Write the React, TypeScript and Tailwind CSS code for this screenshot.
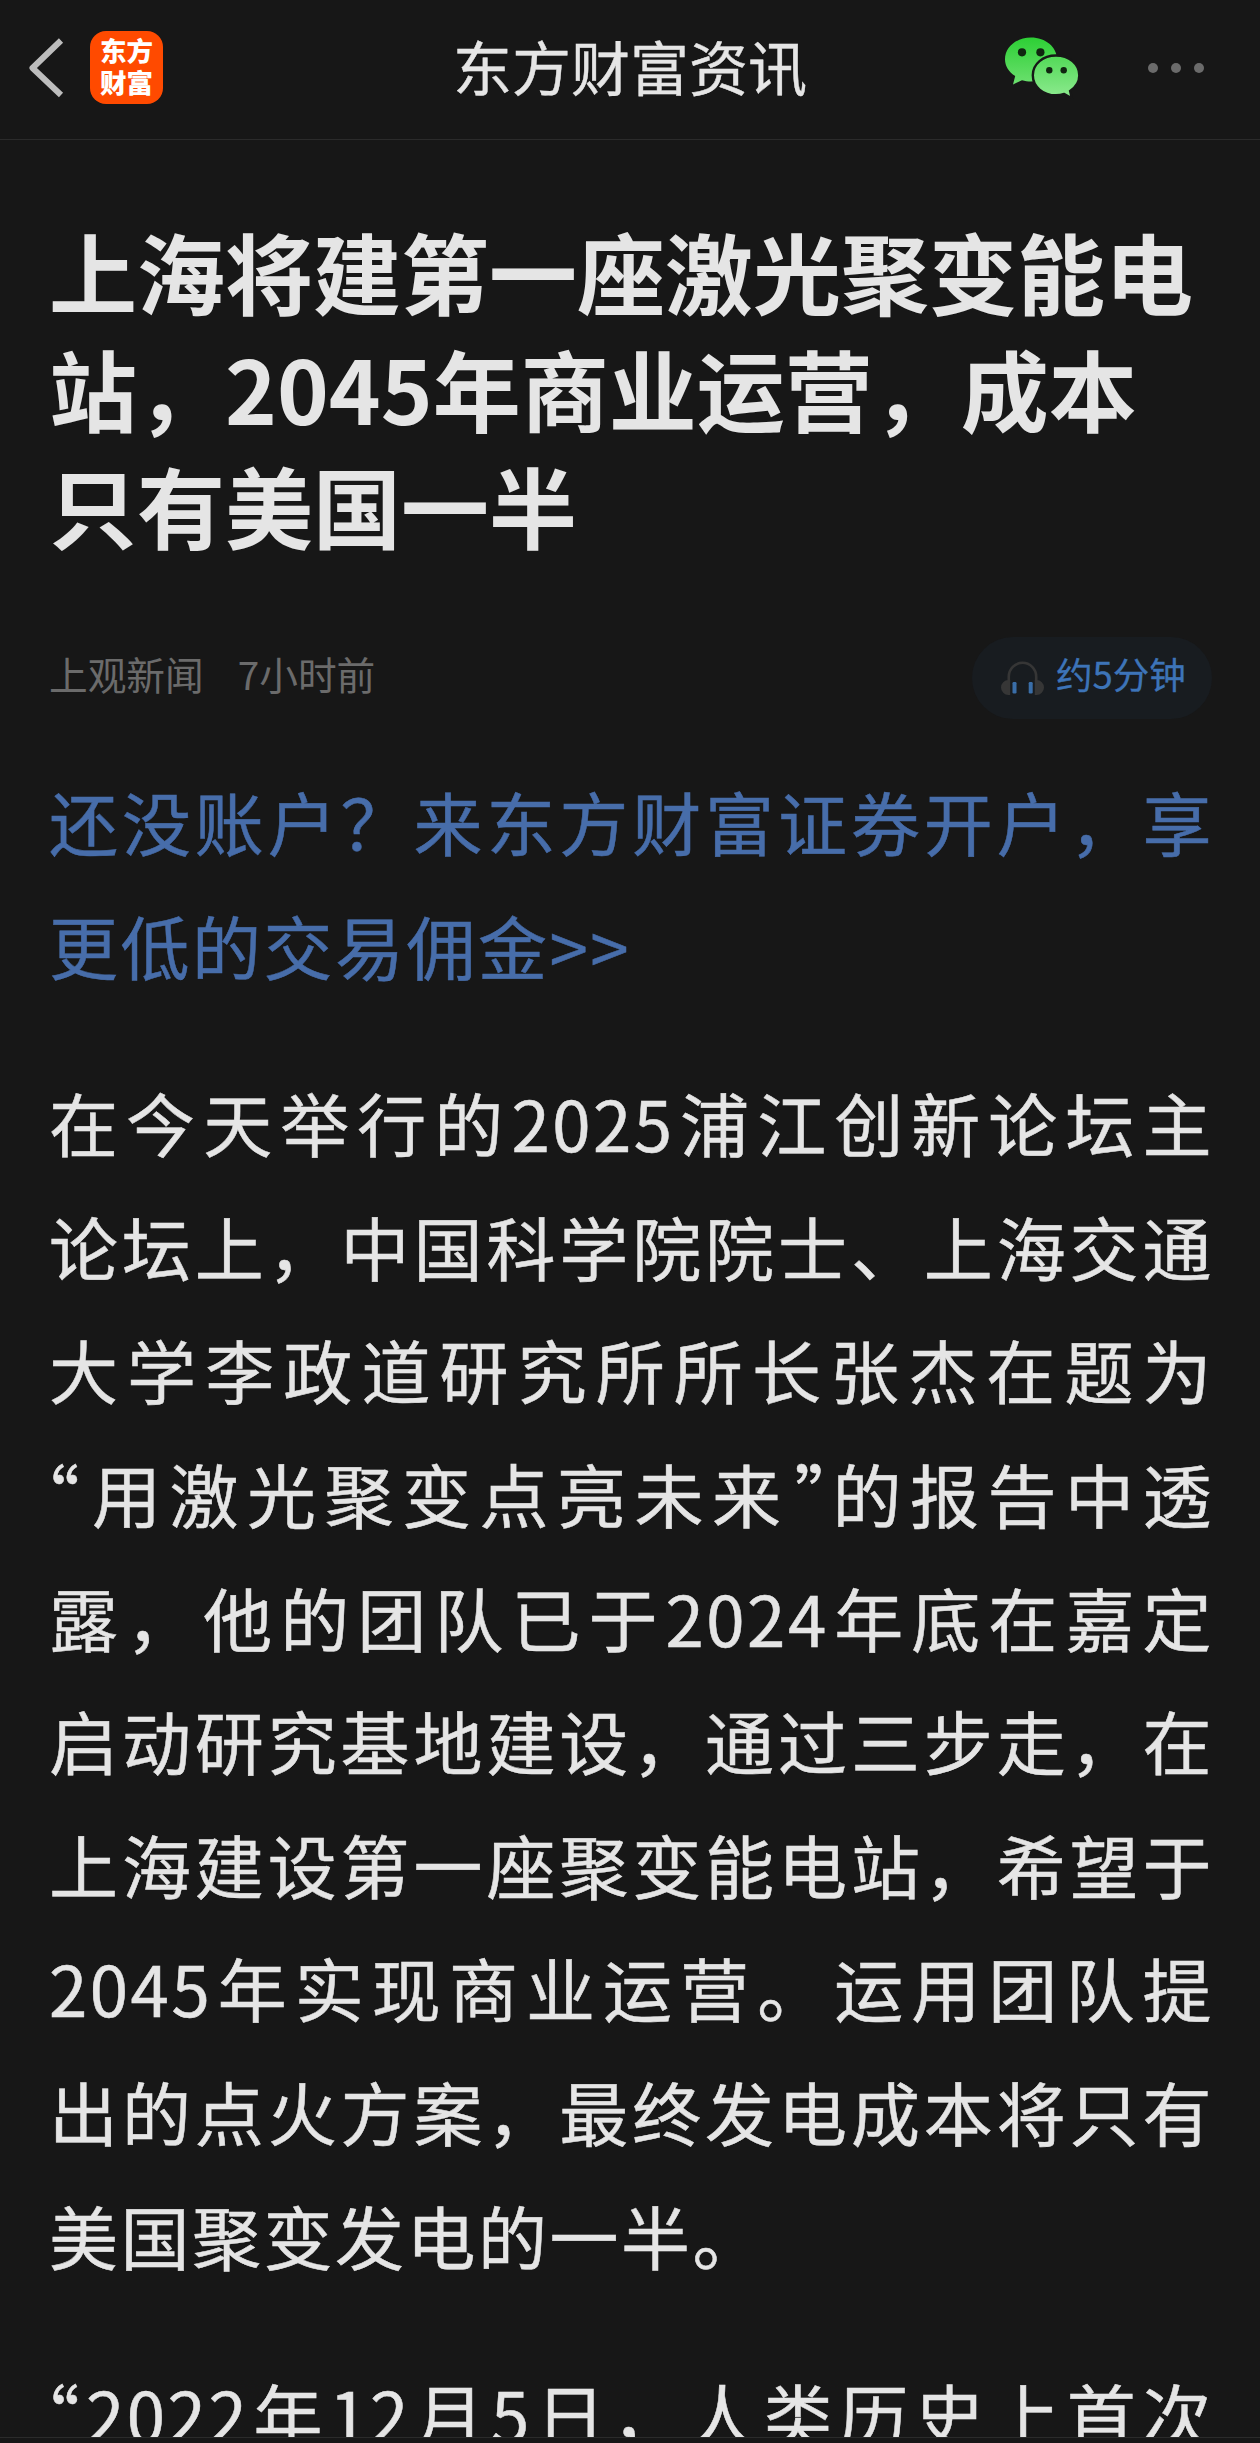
import type { ReactNode } from 'react';

interface LineProps {
  children: ReactNode;
  last?: boolean;
}

const Line = ({ children, last = false }: LineProps) => (
  <span
    className={`block whitespace-nowrap ${
      last ? '' : 'text-justify [text-align-last:justify]'
    }`}
  >
    {children}
  </span>
);

const OpenQuote = () => (
  <span className="-ml-[5px] mr-[5px] [font-feature-settings:'palt']">“</span>
);

const CloseQuote = () => (
  <span className="-mr-[6px] ml-[6px] [font-feature-settings:'palt']">”</span>
);

const WeChatIcon = () => (
  <svg width="76" height="62" viewBox="0 0 76 62">
    <defs>
      <linearGradient id="wechat-back" x1="0" y1="0" x2="0" y2="1">
        <stop offset="0" stopColor="#2dcf35" />
        <stop offset="1" stopColor="#6ce06f" />
      </linearGradient>
      <linearGradient id="wechat-front" x1="0" y1="0" x2="0" y2="1">
        <stop offset="0" stopColor="#52d957" />
        <stop offset="1" stopColor="#8eea90" />
      </linearGradient>
    </defs>
    <path
      fill="url(#wechat-back)"
      d="M27 .5C12.500 .5 1 10.200 1 22.300c0 6.900 3.900 12.800 10.200 16.800L9 47.500l9-4.300c2.900.8 6 1.300 9 1.300 14.500 0 26-9.900 26-22.200S41.500.5 27 .5Z"
    />
    <circle cx="18" cy="15.300" r="4.100" fill="#102510" />
    <circle cx="36.400" cy="15.300" r="4.100" fill="#102510" />
    <path
      fill="url(#wechat-front)"
      stroke="#171717"
      strokeWidth="2.400"
      d="M52 18.500c-13 0-23.200 8.500-23.200 19.800S39 58.300 52 58.300c3 0 5.700-.5 8.300-1.300l7.500 4.300-1.700-7.300c5.700-3.700 9.200-9.300 9.200-15.700C75.300 27 65 18.500 52 18.500Z"
    />
    <circle cx="45.300" cy="33.300" r="3.200" fill="#102510" />
    <circle cx="59.700" cy="33.300" r="3.200" fill="#102510" />
  </svg>
);

const HeadphoneIcon = () => (
  <svg width="43" height="34" viewBox="0 0 43 34">
    <path d="M7.800 21V15.500a13.700 13.700 0 0 1 27.400 0V21" fill="none" stroke="#363636" strokeWidth="2.600" />
    <path d="M9.200 19v15H7.500a7.500 7.500 0 0 1 0-15ZM33.800 19v15h1.700a7.500 7.500 0 0 0 0-15Z" fill="#363636" />
    <rect x="11.500" y="21" width="4" height="11.500" rx="1.200" fill="#3a6ea8" />
    <rect x="27.700" y="21" width="4" height="11.500" rx="1.200" fill="#3a6ea8" />
  </svg>
);

const Header = () => (
  <header className="flex h-[140px] shrink-0 items-center justify-between border-b border-[#2b2b2b] pb-1 pl-7 pr-[56px]">
    <div className="flex w-[400px] items-center gap-[26px]">
      <svg width="36" height="60" viewBox="0 0 36 60" fill="none">
        <path d="M33 2.500 4.500 30 33 57" stroke="#bdbdbd" strokeWidth="6" strokeLinejoin="round" />
      </svg>
      <div className="flex h-[73px] w-[73px] flex-col items-center justify-center rounded-[16px] bg-[#ff4a00] pb-[4px] text-[26.500px] font-black leading-[32px] text-white">
        <span>东方</span>
        <span>财富</span>
      </div>
    </div>
    <h1 className="pb-[4px] text-[59px] leading-none [-webkit-text-stroke:0.4px]">东方财富资讯</h1>
    <div className="flex w-[372px] items-center justify-end gap-[68px]">
      <WeChatIcon />
      <div className="flex gap-[13px]">
        <i className="h-[10px] w-[10px] rounded-full bg-[#6b6b6b]" />
        <i className="h-[10px] w-[10px] rounded-full bg-[#6b6b6b]" />
        <i className="h-[10px] w-[10px] rounded-full bg-[#6b6b6b]" />
      </div>
    </div>
  </header>
);

const App = () => (
  <div
    lang="zh-CN"
    className="flex h-[2443px] w-[1260px] flex-col overflow-hidden bg-[#171717] font-['Noto_Sans_CJK_SC',sans-serif] text-[#e5e5e5]"
  >
    <Header />

    <main className="h-[2297px] overflow-hidden pl-[49px] pr-12 pt-[71px]">
      <h2 className="whitespace-nowrap text-[88px] font-bold leading-[117px]">
        上海将建第一座激光聚变能电
        <br />
        站，2045年商业运营，成本
        <br />
        只有美国一半
      </h2>

      <div className="mt-[75px] flex h-[82px] items-center justify-between">
        <div className="flex gap-[34px] pb-[9px] text-[38.700px] leading-none text-[#6b6b6b]">
          <span>上观新闻</span>
          <span>7小时前</span>
        </div>
        <div className="flex h-[82px] w-[240px] items-center gap-[12px] rounded-full bg-[#181c20] pl-[29px] text-[36.500px] leading-none text-[#3d74b8] [-webkit-text-stroke:0.3px]">
          <HeadphoneIcon />
          <span className="pb-[7px]">约5分钟</span>
        </div>
      </div>

      <article className="-mr-[2px] text-[69px] leading-[123.600px] tracking-[2.500px] [-webkit-text-stroke:0.5px]">
        <p className="mt-[41px] text-[#476daa]">
          <Line>还没账户？来东方财富证券开户，享</Line>
          <Line last>更低的交易佣金&gt;&gt;</Line>
        </p>

        <p className="mt-[54px]">
          <Line>在今天举行的2025浦江创新论坛主</Line>
          <Line>论坛上，中国科学院院士、上海交通</Line>
          <Line>大学李政道研究所所长张杰在题为</Line>
          <Line>
            <OpenQuote />用激光聚变点亮未来<CloseQuote />的报告中透
          </Line>
          <Line>露，他的团队已于2024年底在嘉定</Line>
          <Line>启动研究基地建设，通过三步走，在</Line>
          <Line>上海建设第一座聚变能电站，希望于</Line>
          <Line>2045年实现商业运营。运用团队提</Line>
          <Line>出的点火方案，最终发电成本将只有</Line>
          <Line last>美国聚变发电的一半。</Line>
        </p>

        <p className="mt-[55px]">
          <Line>
            <OpenQuote />2022年12月5日，人类历史上首次
          </Line>
        </p>
      </article>
    </main>

    <footer className="h-[6px] shrink-0 border-t border-[#2b2b2b] bg-[#171717]" />
  </div>
);

export default App;
